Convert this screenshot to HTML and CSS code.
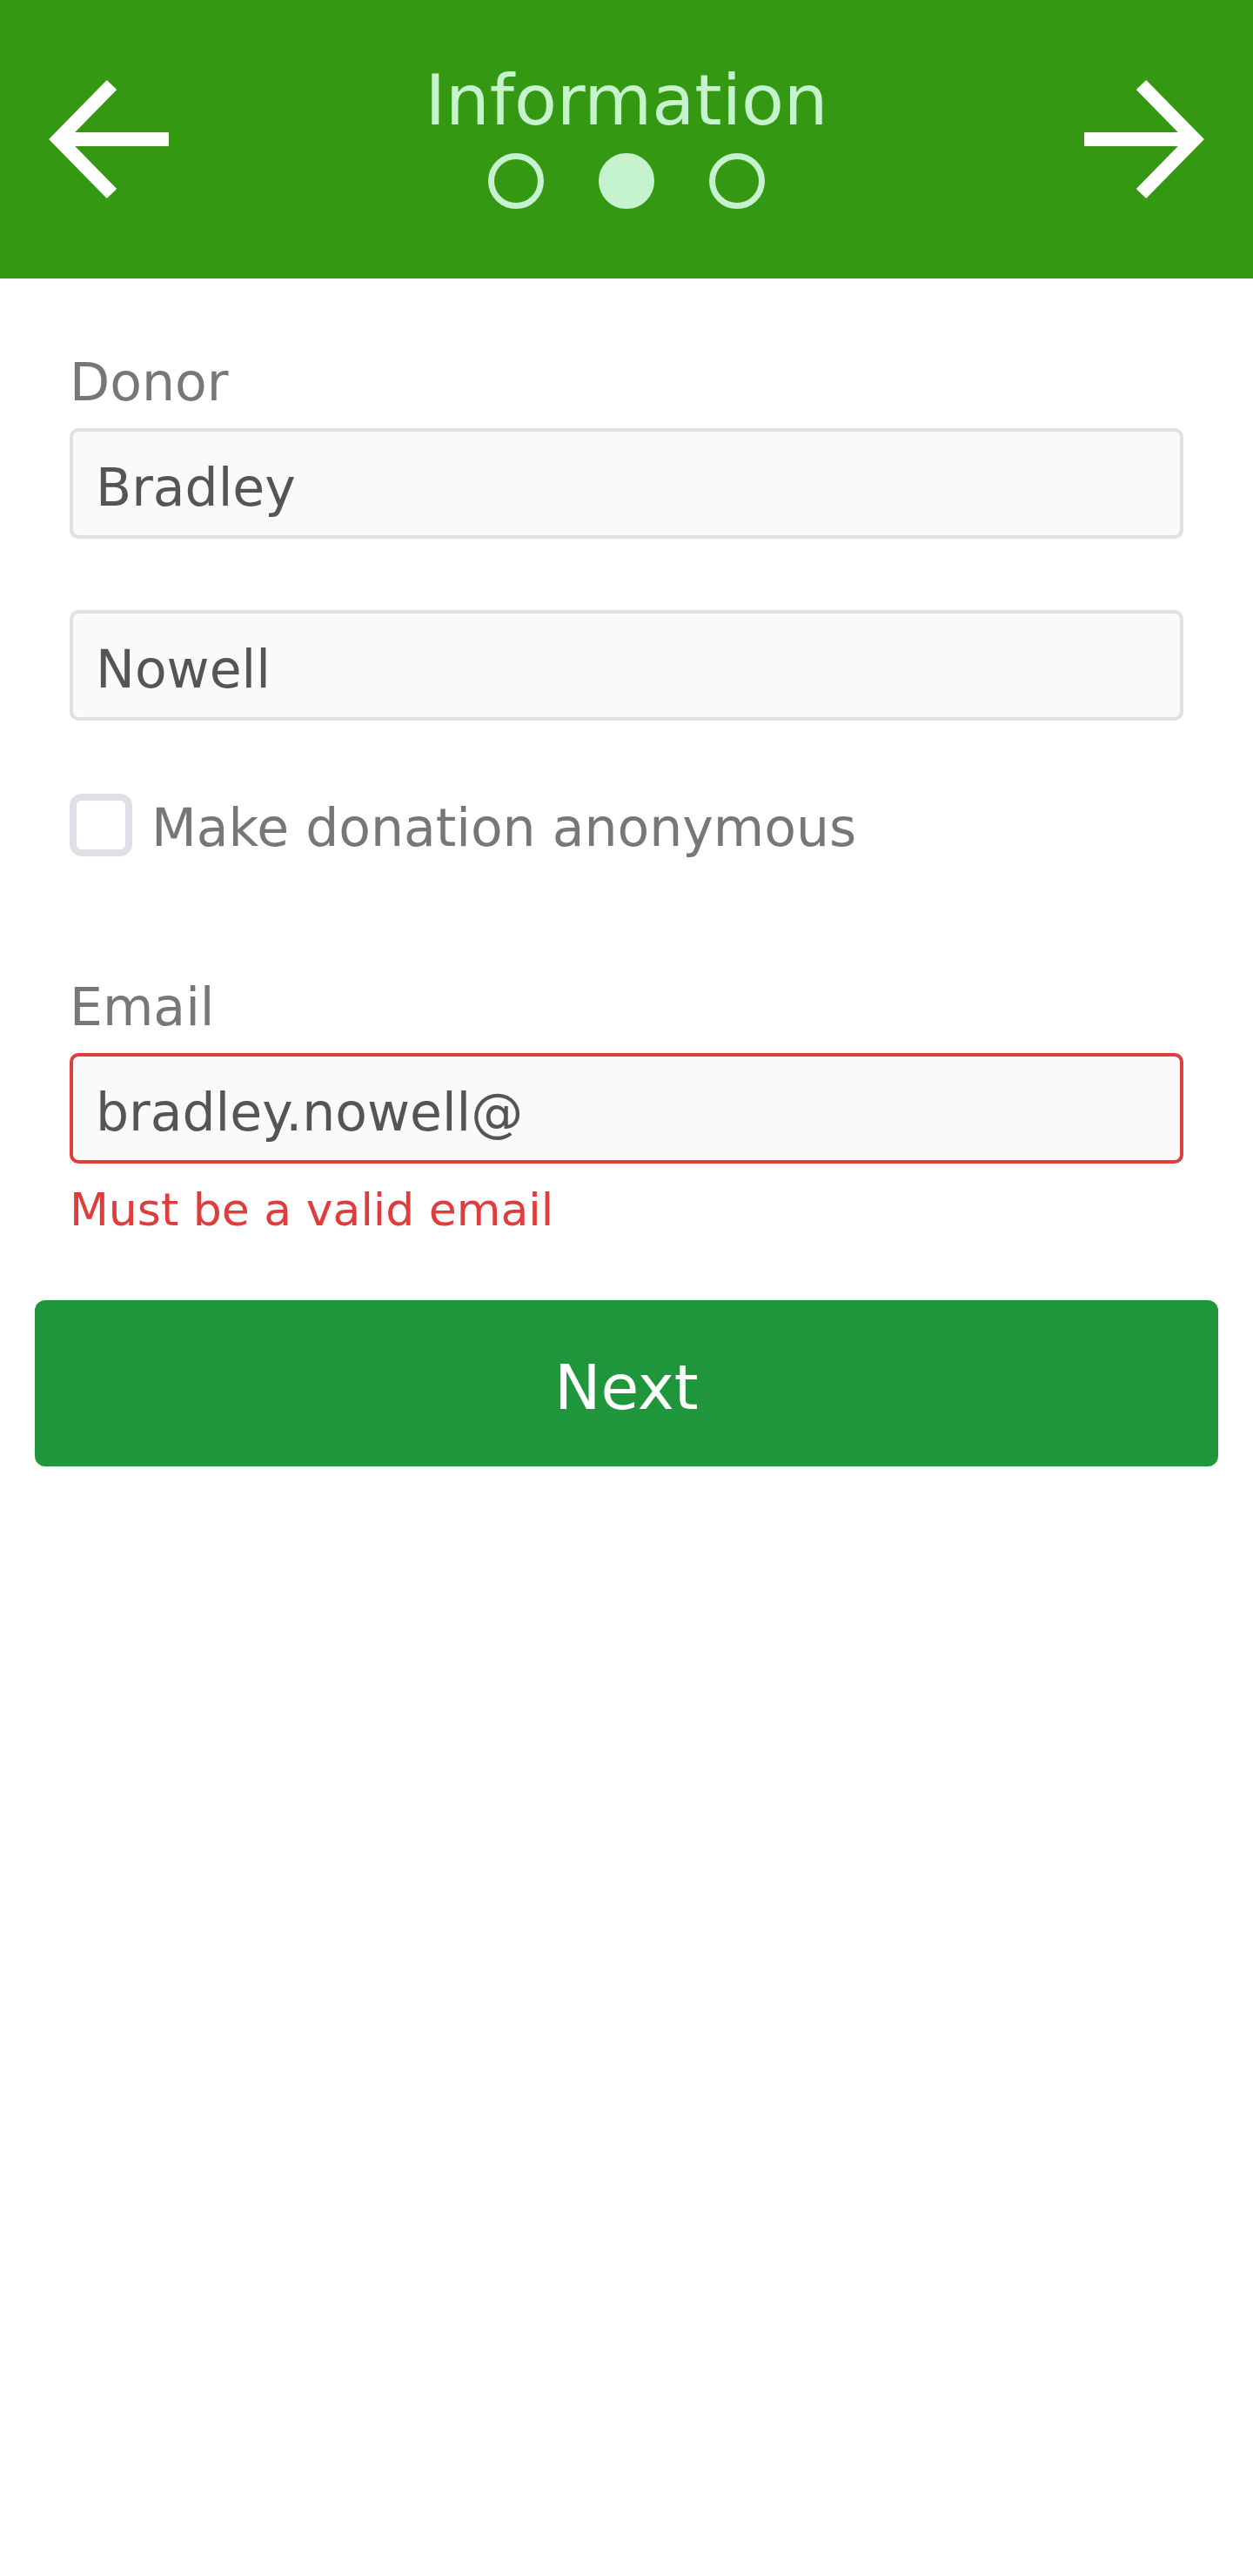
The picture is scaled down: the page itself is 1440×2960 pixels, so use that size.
FILE: index.html
```html
<!DOCTYPE html>
<html lang="en">
<head>
<meta charset="utf-8">
<title>Information</title>
<link rel="stylesheet" href="styles.css">
</head>
<body>
<header class="topbar">
  <svg class="nav-icon" width="140" height="140" viewBox="0 0 140 140" aria-label="Back">
    <path d="M73.5 7.5 L12.3 70 L73.5 132.5 M12.3 70 L139 70" fill="none" stroke="#ffffff" stroke-width="16" stroke-linejoin="miter" stroke-linecap="butt"/>
  </svg>
  <div class="title-block">
    <div class="title">Information</div>
    <div class="steps">
      <span class="step"></span>
      <span class="step active"></span>
      <span class="step"></span>
    </div>
  </div>
  <svg class="nav-icon" width="140" height="140" viewBox="0 0 140 140" aria-label="Forward">
    <path d="M66.5 7.5 L127.7 70 L66.5 132.5 M127.7 70 L1 70" fill="none" stroke="#ffffff" stroke-width="16" stroke-linejoin="miter" stroke-linecap="butt"/>
  </svg>
</header>
<main class="form">
  <label class="label">Donor</label>
  <input class="field" type="text" value="Bradley">
  <input class="field field-gap" type="text" value="Nowell">
  <div class="check-row">
    <span class="checkbox"></span>
    <span class="check-text">Make donation anonymous</span>
  </div>
  <label class="label label-email">Email</label>
  <input class="field field-error" type="text" value="bradley.nowell@">
  <div class="error">Must be a valid email</div>
  <button class="next-btn" type="button">Next</button>
</main>
</body>
</html>
```
FILE: styles.css
```css
* {
  box-sizing: border-box;
}

html, body {
  margin: 0;
  padding: 0;
  background: #ffffff;
}

body {
  font-family: "DejaVu Sans", "Liberation Sans", sans-serif;
}

.topbar {
  display: flex;
  align-items: flex-start;
  justify-content: space-between;
  height: 320px;
  padding: 70px 55px 0;
  background: #359812;
}

.nav-icon {
  display: block;
  margin-top: 20px;
  flex: none;
}

.title-block {
  flex: 1;
  display: flex;
  flex-direction: column;
  align-items: center;
}

.title {
  font-size: 80px;
  line-height: 92px;
  color: #c4f3cd;
}

.steps {
  display: flex;
  gap: 63px;
  margin-top: 14px;
}

.step {
  display: block;
  width: 64px;
  height: 64px;
  border: 7px solid #c4f3cd;
  border-radius: 50%;
}

.step.active {
  background: #c4f3cd;
}

.form {
  display: flex;
  flex-direction: column;
  padding: 84px 80px 0;
}

.label {
  display: block;
  font-size: 60px;
  line-height: 70px;
  color: #777777;
  margin-bottom: 18px;
}

.label-email {
  margin-top: 136px;
}

.field {
  display: block;
  width: 100%;
  height: 127px;
  margin: 0;
  padding: 29px 26px 20px;
  border: 4px solid #dfe0e6;
  border-radius: 10px;
  background: #fafafa;
  font-family: "DejaVu Sans", "Liberation Sans", sans-serif;
  font-size: 60px;
  line-height: 70px;
  color: #555555;
  outline: none;
}

.field-gap {
  margin-top: 82px;
}

.field-error {
  border-color: #e03c3c;
}

.check-row {
  display: flex;
  align-items: flex-start;
  margin-top: 84px;
}

.checkbox {
  display: block;
  flex: none;
  width: 72px;
  height: 72px;
  border: 8px solid #e0e1e6;
  border-radius: 14px;
  background: #ffffff;
}

.check-text {
  margin-left: 22px;
  margin-top: 4px;
  font-size: 60px;
  line-height: 70px;
  color: #777777;
}

.error {
  margin-top: 23px;
  font-size: 52px;
  line-height: 60px;
  color: #e13c3c;
}

.next-btn {
  display: block;
  margin: 74px -40px 0;
  height: 191px;
  padding: 10px 0 0;
  border: none;
  border-radius: 12px;
  background: #1f963c;
  color: #ffffff;
  font-family: "DejaVu Sans", "Liberation Sans", sans-serif;
  font-size: 71px;
  line-height: 181px;
  text-align: center;
}
```
